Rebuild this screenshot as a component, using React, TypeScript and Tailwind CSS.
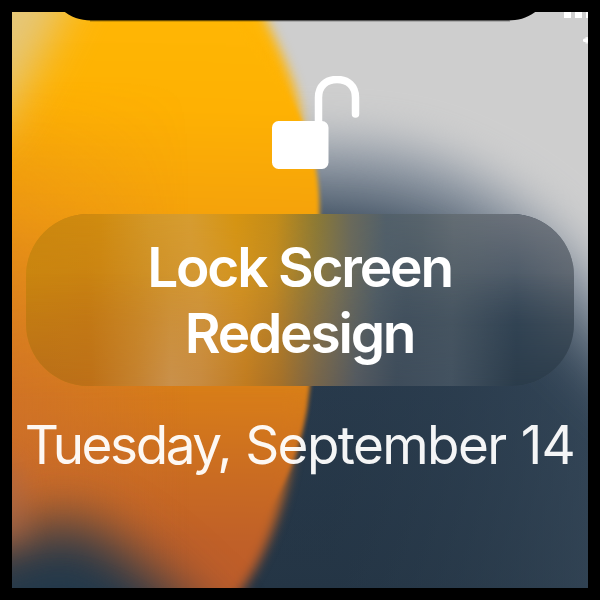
function Wallpaper() {
  return (
    <svg className="absolute inset-0 h-full w-full" viewBox="12 12 576 576" aria-hidden="true">
      <defs>
        <linearGradient id="navy" x1="0" y1="200" x2="0" y2="588" gradientUnits="userSpaceOnUse">
          <stop offset="0" stopColor="#33465a" />
          <stop offset="0.5" stopColor="#2c3e50" />
          <stop offset="1" stopColor="#273848" />
        </linearGradient>
        <linearGradient id="navySide" x1="330" y1="0" x2="588" y2="0" gradientUnits="userSpaceOnUse">
          <stop offset="0" stopColor="#1d2e3e" stopOpacity="0.3" />
          <stop offset="1" stopColor="#37495a" stopOpacity="0.6" />
        </linearGradient>
        <linearGradient id="amber" x1="180" y1="20" x2="165" y2="580" gradientUnits="userSpaceOnUse">
          <stop offset="0" stopColor="#ffb604" />
          <stop offset="0.16" stopColor="#feb103" />
          <stop offset="0.35" stopColor="#f5a20b" />
          <stop offset="0.65" stopColor="#d97f18" />
          <stop offset="0.8" stopColor="#cb6d21" />
          <stop offset="0.93" stopColor="#c06028" />
          <stop offset="1" stopColor="#be5d2a" />
        </linearGradient>
        <linearGradient id="leftShade" x1="12" y1="0" x2="190" y2="0" gradientUnits="userSpaceOnUse">
          <stop offset="0" stopColor="#cb6c32" stopOpacity="0.5" />
          <stop offset="1" stopColor="#cb6c32" stopOpacity="0" />
        </linearGradient>
        <linearGradient id="shadeFade" x1="0" y1="80" x2="0" y2="400" gradientUnits="userSpaceOnUse">
          <stop offset="0" stopColor="black" />
          <stop offset="1" stopColor="white" />
        </linearGradient>
        <mask id="shadeMask" maskUnits="userSpaceOnUse" x="0" y="0" width="600" height="600">
          <rect width="600" height="600" fill="url(#shadeFade)" />
        </mask>
        <filter id="blur2" x="-20%" y="-20%" width="140%" height="140%" colorInterpolationFilters="sRGB"><feGaussianBlur stdDeviation="2" /></filter>
        <filter id="blur6" x="-20%" y="-20%" width="140%" height="140%" colorInterpolationFilters="sRGB"><feGaussianBlur stdDeviation="6" /></filter>
        <filter id="blur14" x="-50%" y="-50%" width="200%" height="200%" colorInterpolationFilters="sRGB"><feGaussianBlur stdDeviation="14" /></filter>
        <filter id="blur22" x="-50%" y="-50%" width="200%" height="200%" colorInterpolationFilters="sRGB"><feGaussianBlur stdDeviation="22" /></filter>
        <filter id="blur28" x="-50%" y="-50%" width="200%" height="200%" colorInterpolationFilters="sRGB"><feGaussianBlur stdDeviation="28" /></filter>
        <filter id="blur36" x="-50%" y="-50%" width="200%" height="200%" colorInterpolationFilters="sRGB"><feGaussianBlur stdDeviation="34" /></filter>
      </defs>
      <rect width="600" height="600" fill="url(#navy)" />
      <rect width="600" height="600" fill="url(#navySide)" />
      <path d="M160-100H750V480C680 430 630 375 588 338C548 290 500 240 420 213C370 200 330 198 250 198Z" fill="#b4bac3" opacity="0.78" filter="url(#blur36)" />
      <path d="M160-100H750V390C670 360 630 310 588 262C548 210 475 162 405 146C365 139 330 138 250 138Z" fill="#cecece" filter="url(#blur22)" />
      <path d="M-80-60H215L262 12C278 44 294 78 300 108C305 145 295 200 260 240H-80Z" fill="url(#amber)" filter="url(#blur6)" />
      <path d="M-60 10H225C262 50 291 95 306 130C315 157 319 180 319.500 205C320 280 314 360 307 410C300 448 289 478 268 508C248 536 230 560 205 590H-60Z" fill="url(#amber)" filter="url(#blur2)" />
      <path d="M-60 400H296C297 465 277 540 242 590L202 640H-60Z" fill="url(#amber)" filter="url(#blur6)" />
      <rect x="12" y="80" width="178" height="508" fill="url(#leftShade)" mask="url(#shadeMask)" />
      <path d="M-40-40H86L54 30L24 85L-10 140H-40Z" fill="#dfcb96" opacity="0.8" filter="url(#blur22)" />
      <path d="M-100 720V560L12 542C35 532 48 520 66 520C98 527 145 562 212 630V720Z" fill="#22384a" filter="url(#blur28)" />
      <path d="M-100 720V600H10C40 572 90 580 140 615V720Z" fill="#253a4b" opacity="0.75" filter="url(#blur14)" />
      <path d="M-60 455L18 465L26 540H-60Z" fill="#a5694f" opacity="0.6" filter="url(#blur14)" />
      <path d="M60 8C72 19 82 20.500 95 20.500H505C518 20.500 528 19 540 8Z" fill="#000" />
      <path d="M90 21H510" stroke="#000" strokeOpacity="0.35" />
      <g fill="#fff">
        <rect x="564" y="11" width="7" height="7" />
        <rect x="575" y="11" width="7" height="7" />
        <rect x="586" y="11" width="7" height="7" />
        <rect x="583" y="38.500" width="6" height="3.500" rx="1.500" />
        <rect x="585.500" y="37" width="4" height="6.500" opacity="0.75" />
      </g>
    </svg>
  );
}

function OpenLock() {
  return (
    <svg className="ml-8 h-[94px] w-[90px]" viewBox="271 76 90 94" aria-label="Unlocked">
      <rect x="272" y="121" width="56.500" height="48" rx="6.500" fill="#fff" />
      <path d="M318.500 124V97.500C318.500 86 326 79.500 337 79.500S355.500 86 355.500 97.500V114" fill="none" stroke="#fff" strokeWidth="7.500" strokeLinecap="round" />
    </svg>
  );
}

export default function App() {
  return (
    <div className="h-[600px] w-[600px] overflow-hidden bg-black p-3 font-['Inter','Liberation_Sans',sans-serif] text-white">
      <main className="relative h-[576px] w-[576px] overflow-hidden">
        <Wallpaper />
        <div className="relative flex flex-col items-center pt-16">
          <OpenLock />
          <section className="relative mt-11 h-[172px] w-[548px] overflow-hidden rounded-[62px]">
            <div className="absolute inset-0 bg-[linear-gradient(90deg,#c98410_0px,#c67e13_60px,#cb8923_115px,#d2973a_174px,#d19329_215px,#c48b27_245px,#9e7e37_275px,#797156_310px,#505e67_350px,#43525f_380px,#485661_428px,#37495a_490px,#505b66_548px)]" />
            <div className="absolute inset-0 bg-[linear-gradient(90deg,#cb870f_0px,#d08b0f_74px,#d39828_124px,#d69c30_164px,#d59411_210px,#c38c19_250px,#8d7a33_290px,#69695b_325px,#52606a_360px,#58646c_395px,#646d74_428px,#6a717a_480px,#747981_548px)] [mask-image:linear-gradient(180deg,black_0%,transparent_65%)]" />
            <div className="absolute inset-0 bg-[linear-gradient(90deg,#b86d19_0px,#bd7018_65px,#c4812f_110px,#c9904b_145px,#c78a40_174px,#c07b20_220px,#a47029_255px,#77654a_290px,#535960_330px,#3e4c5a_370px,#435260_425px,#2b3c4b_490px,#2b3c4b_548px)] [mask-image:linear-gradient(0deg,black_0%,transparent_65%)]" />
            <h1 className="relative pt-5 pr-px text-center text-[55px] leading-[66px] font-semibold tracking-[-2.2px]">
              Lock Screen
              <br />
              Redesign
            </h1>
          </section>
          <p className="mt-[27px] flex gap-[15px] text-[53px] leading-[64px] font-normal whitespace-nowrap text-white/95">
            <span className="tracking-[-2.4px]">Tuesday,</span>
            <span className="tracking-[-1.6px]">September</span>
            <span className="tracking-[-0.6px]">14</span>
          </p>
        </div>
      </main>
    </div>
  );
}
